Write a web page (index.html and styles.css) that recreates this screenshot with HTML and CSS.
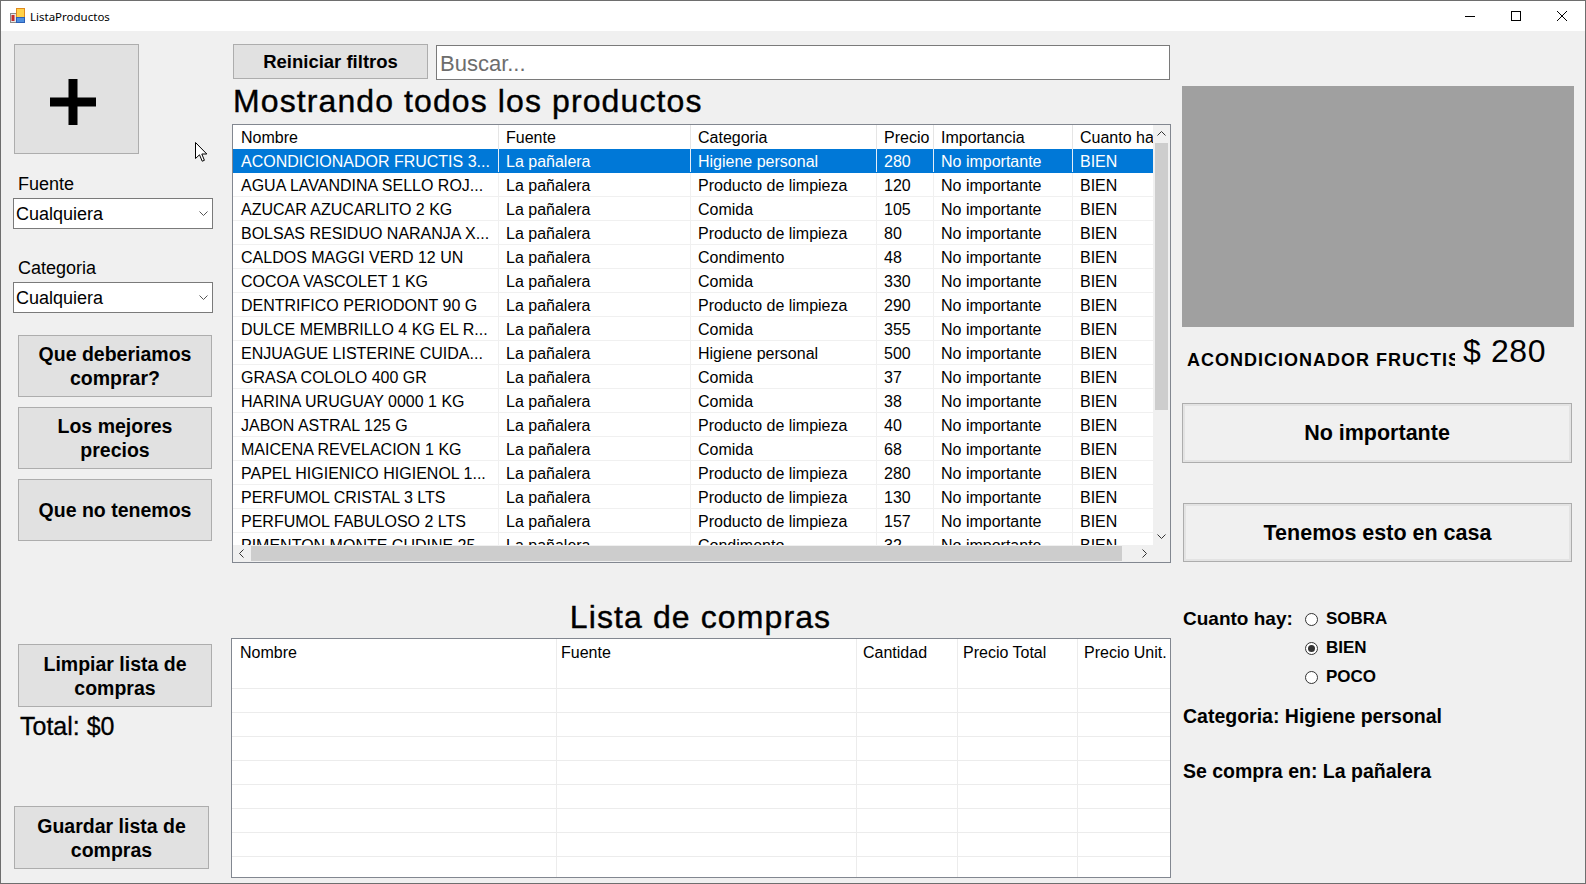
FILE: index.html
```html
<!DOCTYPE html>
<html lang="es">
<head>
<meta charset="utf-8">
<title>ListaProductos</title>
<link rel="stylesheet" href="styles.css">
</head>
<body>
<div class="window">
  <div class="titlebar">
    <svg class="app-icon" width="15" height="15" viewBox="0 0 15 15">
      <rect x="0.5" y="5.5" width="6" height="9" fill="#e6e6e6" stroke="#8a8a8a"/>
      <rect x="1.5" y="7" width="3" height="6" fill="#c42a2a"/>
      <rect x="6.5" y="0.5" width="8" height="9" fill="#ffd24a" stroke="#e08a1e"/>
      <rect x="6.5" y="9.5" width="8" height="5" fill="#4d8fe0" stroke="#2c5fb5"/>
    </svg>
    <span class="title">ListaProductos</span>
    <div class="caption">
      <div class="cap-btn"><svg width="10" height="10" viewBox="0 0 10 10"><line x1="0" y1="5.5" x2="10" y2="5.5" stroke="#000" stroke-width="1"/></svg></div>
      <div class="cap-btn"><svg width="10" height="10" viewBox="0 0 10 10"><rect x="0.5" y="0.5" width="9" height="9" fill="none" stroke="#000" stroke-width="1"/></svg></div>
      <div class="cap-btn"><svg width="10" height="10" viewBox="0 0 10 10"><path d="M0 0L10 10M10 0L0 10" stroke="#000" stroke-width="1"/></svg></div>
    </div>
  </div>

  <div class="client">
    <aside class="left">
      <div class="btn plus">
        <svg width="46" height="46" viewBox="0 0 46 46"><rect x="0" y="18.5" width="46" height="9" fill="#000"/><rect x="18.5" y="0" width="9" height="46" fill="#000"/></svg>
      </div>
      <div class="label lbl-fuente">Fuente</div>
      <div class="combo"><span>Cualquiera</span><svg width="9" height="5" viewBox="0 0 9 5"><polyline points="0.5,0.5 4.5,4.5 8.5,0.5" fill="none" stroke="#555" stroke-width="1"/></svg></div>
      <div class="label lbl-cat">Categoria</div>
      <div class="combo combo2"><span>Cualquiera</span><svg width="9" height="5" viewBox="0 0 9 5"><polyline points="0.5,0.5 4.5,4.5 8.5,0.5" fill="none" stroke="#555" stroke-width="1"/></svg></div>
      <div class="btn side-btn first">Que deberiamos<br>comprar?</div>
      <div class="btn side-btn">Los mejores<br>precios</div>
      <div class="btn side-btn">Que no tenemos</div>
      <div class="btn side-btn limpiar">Limpiar lista de<br>compras</div>
      <div class="total">Total: $0</div>
      <div class="btn side-btn guardar">Guardar lista de<br>compras</div>
    </aside>

    <main class="center">
      <div class="toolbar">
        <div class="btn reset">Reiniciar filtros</div>
        <div class="search"><span>Buscar...</span></div>
      </div>
      <h1 class="heading">Mostrando todos los productos</h1>

      <div class="grid">
        <div class="table">
          <div class="row head"><div class="n">Nombre</div><div class="f">Fuente</div><div class="k">Categoria</div><div class="p">Precio</div><div class="i">Importancia</div><div class="h">Cuanto hay</div></div>
          <div class="row sel"><div class="n">ACONDICIONADOR FRUCTIS 3...</div><div class="f">La pañalera</div><div class="k">Higiene personal</div><div class="p">280</div><div class="i">No importante</div><div class="h">BIEN</div></div>
          <div class="row"><div class="n">AGUA LAVANDINA SELLO ROJ...</div><div class="f">La pañalera</div><div class="k">Producto de limpieza</div><div class="p">120</div><div class="i">No importante</div><div class="h">BIEN</div></div>
          <div class="row"><div class="n">AZUCAR AZUCARLITO 2 KG</div><div class="f">La pañalera</div><div class="k">Comida</div><div class="p">105</div><div class="i">No importante</div><div class="h">BIEN</div></div>
          <div class="row"><div class="n">BOLSAS RESIDUO NARANJA X...</div><div class="f">La pañalera</div><div class="k">Producto de limpieza</div><div class="p">80</div><div class="i">No importante</div><div class="h">BIEN</div></div>
          <div class="row"><div class="n">CALDOS MAGGI VERD 12 UN</div><div class="f">La pañalera</div><div class="k">Condimento</div><div class="p">48</div><div class="i">No importante</div><div class="h">BIEN</div></div>
          <div class="row"><div class="n">COCOA VASCOLET 1 KG</div><div class="f">La pañalera</div><div class="k">Comida</div><div class="p">330</div><div class="i">No importante</div><div class="h">BIEN</div></div>
          <div class="row"><div class="n">DENTRIFICO PERIODONT 90 G</div><div class="f">La pañalera</div><div class="k">Producto de limpieza</div><div class="p">290</div><div class="i">No importante</div><div class="h">BIEN</div></div>
          <div class="row"><div class="n">DULCE MEMBRILLO 4 KG EL R...</div><div class="f">La pañalera</div><div class="k">Comida</div><div class="p">355</div><div class="i">No importante</div><div class="h">BIEN</div></div>
          <div class="row"><div class="n">ENJUAGUE LISTERINE CUIDA...</div><div class="f">La pañalera</div><div class="k">Higiene personal</div><div class="p">500</div><div class="i">No importante</div><div class="h">BIEN</div></div>
          <div class="row"><div class="n">GRASA COLOLO 400 GR</div><div class="f">La pañalera</div><div class="k">Comida</div><div class="p">37</div><div class="i">No importante</div><div class="h">BIEN</div></div>
          <div class="row"><div class="n">HARINA URUGUAY 0000 1 KG</div><div class="f">La pañalera</div><div class="k">Comida</div><div class="p">38</div><div class="i">No importante</div><div class="h">BIEN</div></div>
          <div class="row"><div class="n">JABON ASTRAL 125 G</div><div class="f">La pañalera</div><div class="k">Producto de limpieza</div><div class="p">40</div><div class="i">No importante</div><div class="h">BIEN</div></div>
          <div class="row"><div class="n">MAICENA REVELACION 1 KG</div><div class="f">La pañalera</div><div class="k">Comida</div><div class="p">68</div><div class="i">No importante</div><div class="h">BIEN</div></div>
          <div class="row"><div class="n">PAPEL HIGIENICO HIGIENOL 1...</div><div class="f">La pañalera</div><div class="k">Producto de limpieza</div><div class="p">280</div><div class="i">No importante</div><div class="h">BIEN</div></div>
          <div class="row"><div class="n">PERFUMOL CRISTAL 3 LTS</div><div class="f">La pañalera</div><div class="k">Producto de limpieza</div><div class="p">130</div><div class="i">No importante</div><div class="h">BIEN</div></div>
          <div class="row"><div class="n">PERFUMOL FABULOSO 2 LTS</div><div class="f">La pañalera</div><div class="k">Producto de limpieza</div><div class="p">157</div><div class="i">No importante</div><div class="h">BIEN</div></div>
          <div class="row"><div class="n">PIMENTON MONTE CUDINE 25...</div><div class="f">La pañalera</div><div class="k">Condimento</div><div class="p">32</div><div class="i">No importante</div><div class="h">BIEN</div></div>
        </div>
        <div class="vscroll">
          <div class="arrow"><svg width="9" height="5" viewBox="0 0 9 5"><polyline points="0.5,4.5 4.5,0.5 8.5,4.5" fill="none" stroke="#333"/></svg></div>
          <div class="vthumb"></div>
          <div class="arrow end"><svg width="9" height="5" viewBox="0 0 9 5"><polyline points="0.5,0.5 4.5,4.5 8.5,0.5" fill="none" stroke="#333"/></svg></div>
        </div>
        <div class="hscroll">
          <div class="arrow"><svg width="5" height="9" viewBox="0 0 5 9"><polyline points="4.5,0.5 0.5,4.5 4.5,8.5" fill="none" stroke="#333"/></svg></div>
          <div class="hthumb"></div>
          <div class="arrow end"><svg width="5" height="9" viewBox="0 0 5 9"><polyline points="0.5,0.5 4.5,4.5 0.5,8.5" fill="none" stroke="#333"/></svg></div>
        </div>
        <div class="corner"></div>
      </div>

      <h2 class="heading sub">Lista de compras</h2>

      <div class="list-grid">
        <div class="lrow lhead"><div class="ln">Nombre</div><div class="lf">Fuente</div><div class="lc">Cantidad</div><div class="lt">Precio Total</div><div class="lu">Precio Unit.</div></div>
        <div class="lrow"><div class="ln"></div><div class="lf"></div><div class="lc"></div><div class="lt"></div><div class="lu"></div></div>
        <div class="lrow"><div class="ln"></div><div class="lf"></div><div class="lc"></div><div class="lt"></div><div class="lu"></div></div>
        <div class="lrow"><div class="ln"></div><div class="lf"></div><div class="lc"></div><div class="lt"></div><div class="lu"></div></div>
        <div class="lrow"><div class="ln"></div><div class="lf"></div><div class="lc"></div><div class="lt"></div><div class="lu"></div></div>
        <div class="lrow"><div class="ln"></div><div class="lf"></div><div class="lc"></div><div class="lt"></div><div class="lu"></div></div>
        <div class="lrow"><div class="ln"></div><div class="lf"></div><div class="lc"></div><div class="lt"></div><div class="lu"></div></div>
        <div class="lrow"><div class="ln"></div><div class="lf"></div><div class="lc"></div><div class="lt"></div><div class="lu"></div></div>
        <div class="lrow"><div class="ln"></div><div class="lf"></div><div class="lc"></div><div class="lt"></div><div class="lu"></div></div>
        <div class="lrow"><div class="ln"></div><div class="lf"></div><div class="lc"></div><div class="lt"></div><div class="lu"></div></div>
      </div>
    </main>

    <section class="right">
      <div class="photo"></div>
      <div class="info">
        <div class="prod-name">ACONDICIONADOR FRUCTIS 3...</div>
        <div class="price">$ 280</div>
      </div>
      <div class="big-btn">No importante</div>
      <div class="big-btn casa">Tenemos esto en casa</div>
      <div class="qty">
        <div class="qty-label">Cuanto hay:</div>
        <div class="radios">
          <div class="radio"><svg width="13" height="13" viewBox="0 0 13 13"><circle cx="6.5" cy="6.5" r="6" fill="#fff" stroke="#333"/></svg><span>SOBRA</span></div>
          <div class="radio"><svg width="13" height="13" viewBox="0 0 13 13"><circle cx="6.5" cy="6.5" r="6" fill="#fff" stroke="#333"/><circle cx="6.5" cy="6.5" r="3.5" fill="#333"/></svg><span>BIEN</span></div>
          <div class="radio"><svg width="13" height="13" viewBox="0 0 13 13"><circle cx="6.5" cy="6.5" r="6" fill="#fff" stroke="#333"/></svg><span>POCO</span></div>
        </div>
      </div>
      <div class="detail cat">Categoria: Higiene personal</div>
      <div class="detail where">Se compra en: La pañalera</div>
    </section>
  </div>

  <svg class="cursor" width="13" height="21" viewBox="0 0 13 21">
    <path d="M0.5 0.5 L0.5 16.5 L4.5 12.8 L7.2 19.2 L9.4 18.3 L6.8 12 L11.8 12 Z" fill="#fff" stroke="#000" stroke-width="1" stroke-linejoin="miter"/>
  </svg>
</div>
</body>
</html>
```

FILE: styles.css
```css
* { box-sizing: border-box; margin: 0; padding: 0; }

body {
  margin: 0;
  background: #fff;
  font-family: "Liberation Sans", Arial, sans-serif;
  color: #000;
}

.window {
  position: relative;
  width: 1586px;
  height: 884px;
  border: 1px solid #6e6e6e;
  background: #f0f0f0;
  display: flex;
  flex-direction: column;
  overflow: hidden;
}

/* ---------- title bar ---------- */
.titlebar {
  flex: none;
  height: 30px;
  background: #fff;
  display: flex;
  align-items: center;
}
.app-icon { margin-left: 9px; margin-top: -1px; }
.title {
  margin-left: 5px;
  font-family: "Noto Sans", "Open Sans", sans-serif;
  font-size: 11.5px;
  color: #000;
}
.caption { margin-left: auto; display: flex; height: 30px; }
.cap-btn {
  width: 46px;
  height: 30px;
  display: flex;
  align-items: center;
  justify-content: center;
}

.client { flex: 1; display: flex; }

/* ---------- generic button ---------- */
.btn {
  background: #e1e1e1;
  border: 1px solid #adadad;
  font-weight: bold;
  color: #000;
  text-align: center;
}

/* ---------- left column ---------- */
.left {
  width: 229px;
  flex: none;
  padding-left: 12px;
  display: flex;
  flex-direction: column;
  align-items: flex-start;
}
.plus {
  margin: 13px 0 0 1px;
  width: 125px;
  height: 110px;
  padding: 34px 0 0 35px;
  display: flex;
  align-items: flex-start;
}
.label {
  font-size: 18px;
  line-height: 22px;
  margin-left: 5px;
}
.lbl-fuente { margin-top: 19px; }
.lbl-cat { margin-top: 28px; }
.combo {
  width: 200px;
  height: 31px;
  margin-top: 3px;
  background: #fff;
  border: 1px solid #7a7a7a;
  display: flex;
  align-items: center;
  justify-content: space-between;
  padding: 0 4px 0 2px;
  font-size: 18px;
  line-height: 22px;
}
.combo2 { margin-top: 3px; }
.side-btn {
  width: 194px;
  height: 62px;
  margin-left: 5px;
  margin-top: 10px;
  font-size: 19.5px;
  line-height: 24px;
  display: flex;
  align-items: center;
  justify-content: center;
}
.side-btn.first { margin-top: 22px; }
.side-btn.limpiar { margin-top: 103px; height: 63px; }
.side-btn.guardar { margin-top: 65px; margin-left: 1px; width: 195px; height: 63px; }
.total {
  margin: 4px 0 0 7px;
  font-size: 25px;
  line-height: 30px;
  -webkit-text-stroke: 0.3px #000;
}

/* ---------- center column ---------- */
.center {
  width: 941px;
  flex: none;
  display: flex;
  flex-direction: column;
  align-items: flex-start;
}
.toolbar {
  display: flex;
  align-items: flex-start;
  gap: 8px;
  margin: 13px 0 0 3px;
}
.reset {
  width: 195px;
  height: 35px;
  font-size: 18.5px;
  line-height: 33px;
}
.search {
  width: 734px;
  height: 35px;
  margin-top: 1px;
  background: #fff;
  border: 1px solid #7a7a7a;
  font-size: 22px;
  line-height: 26px;
  color: #6d6d6d;
  padding: 2px 0 0 3px;
  display: flex;
  align-items: center;
}
.heading {
  font-size: 32px;
  line-height: 34px;
  letter-spacing: 1.1px;
  font-weight: normal;
  -webkit-text-stroke: 0.4px #000;
  margin: 4px 0 0 3px;
}
.heading.sub {
  align-self: stretch;
  text-align: center;
  margin: 37px 0 0 0;
}

/* products grid */
.grid {
  margin: 6px 0 0 2px;
  width: 939px;
  height: 439px;
  border: 1px solid #828790;
  background: #fff;
  display: grid;
  grid-template-columns: 1fr 17px;
  grid-template-rows: 1fr 17px;
}
.table { overflow: hidden; font-size: 16px; }
.row {
  display: flex;
  height: 24px;
  border-bottom: 1px solid #f0f0f0;
  white-space: nowrap;
}
.row > div {
  flex: none;
  overflow: hidden;
  padding: 2px 0 0 7px;
  line-height: 21px;
  border-right: 1px solid #f0f0f0;
}
.row.head { border-bottom: none; }
.row.head > div { border-right-color: #e5e5e5; }
.row.sel { background: #0078d7; color: #fff; border-bottom-color: #0078d7; }
.row.sel > div { border-right-color: #e6eef7; }
.n { width: 266px; padding-left: 8px !important; }
.f { width: 192px; }
.k { width: 186px; }
.p { width: 57px; }
.i { width: 139px; }
.h { width: 120px; }

.vscroll, .hscroll, .corner { background: #f0f0f0; }
.vscroll { display: flex; flex-direction: column; align-items: center; }
.hscroll { display: flex; align-items: center; }
.arrow {
  flex: none;
  width: 17px;
  height: 17px;
  display: flex;
  align-items: center;
  justify-content: center;
}
.vscroll .arrow.end { margin-top: auto; }
.hscroll .arrow.end { margin-left: auto; }
.vthumb {
  width: 13px;
  height: 267px;
  margin-top: 1px;
  background: #cdcdcd;
}
.hthumb {
  width: 871px;
  height: 15px;
  margin-left: 1px;
  background: #cdcdcd;
}

/* shopping list grid */
.list-grid {
  margin: 4px 0 0 1px;
  width: 940px;
  height: 240px;
  border: 1px solid #828790;
  background: #fff;
  overflow: hidden;
  font-size: 16px;
}
.lrow {
  display: flex;
  height: 24px;
  border-bottom: 1px solid #ececec;
}
.lrow.lhead { border-bottom: none; height: 26px; }
.lrow.lhead > div { padding-top: 3px; }
.lrow > div {
  flex: none;
  height: 100%;
  border-right: 1px solid #ececec;
  line-height: 21px;
  padding-left: 6px;
  white-space: nowrap;
  overflow: hidden;
}
.ln { width: 325px; padding-left: 8px !important; }
.lf { width: 300px; padding-left: 4px !important; }
.lc { width: 101px; }
.lt { width: 120px; padding-left: 5px !important; }
.lu { width: 92px; border-right: none !important; }

/* ---------- right column ---------- */
.right {
  width: 392px;
  flex: none;
  margin-left: 11px;
  display: flex;
  flex-direction: column;
  align-items: flex-start;
}
.photo {
  width: 392px;
  height: 241px;
  margin-top: 55px;
  background: #a0a0a0;
}
.info {
  display: flex;
  margin-top: 6px;
  padding-left: 5px;
}
.prod-name {
  width: 268px;
  overflow: hidden;
  white-space: nowrap;
  font-weight: bold;
  font-size: 18px;
  line-height: 22px;
  letter-spacing: 1px;
  margin-top: 16px;
}
.price {
  margin-left: 8px;
  font-size: 32px;
  line-height: 36px;
  letter-spacing: 0.6px;
}
.big-btn {
  width: 390px;
  height: 60px;
  margin-top: 32px;
  background: #f0f0f0;
  border: 1px solid #adadad;
  box-shadow: inset 0 0 0 2px #e3e3e3;
  font-weight: bold;
  font-size: 21.5px;
  display: flex;
  align-items: center;
  justify-content: center;
}
.big-btn.casa {
  margin-top: 40px;
  margin-left: 1px;
  width: 389px;
  height: 59px;
  padding-top: 1px;
}
.qty {
  display: flex;
  margin: 46px 0 0 1px;
}
.qty-label {
  width: 122px;
  font-size: 19px;
  line-height: 22px;
  font-weight: bold;
}
.radios { display: flex; flex-direction: column; gap: 7px; }
.radio {
  display: flex;
  align-items: center;
  gap: 8px;
  height: 22px;
  font-size: 17px;
  line-height: 22px;
  font-weight: bold;
}
.detail {
  font-size: 19.5px;
  line-height: 24px;
  font-weight: bold;
  margin-left: 1px;
}
.detail.cat { margin-top: 16px; }
.detail.where { margin-top: 31px; }

/* ---------- mouse pointer overlay ---------- */
.cursor {
  position: absolute;
  left: 194px;
  top: 141px;
}
```
